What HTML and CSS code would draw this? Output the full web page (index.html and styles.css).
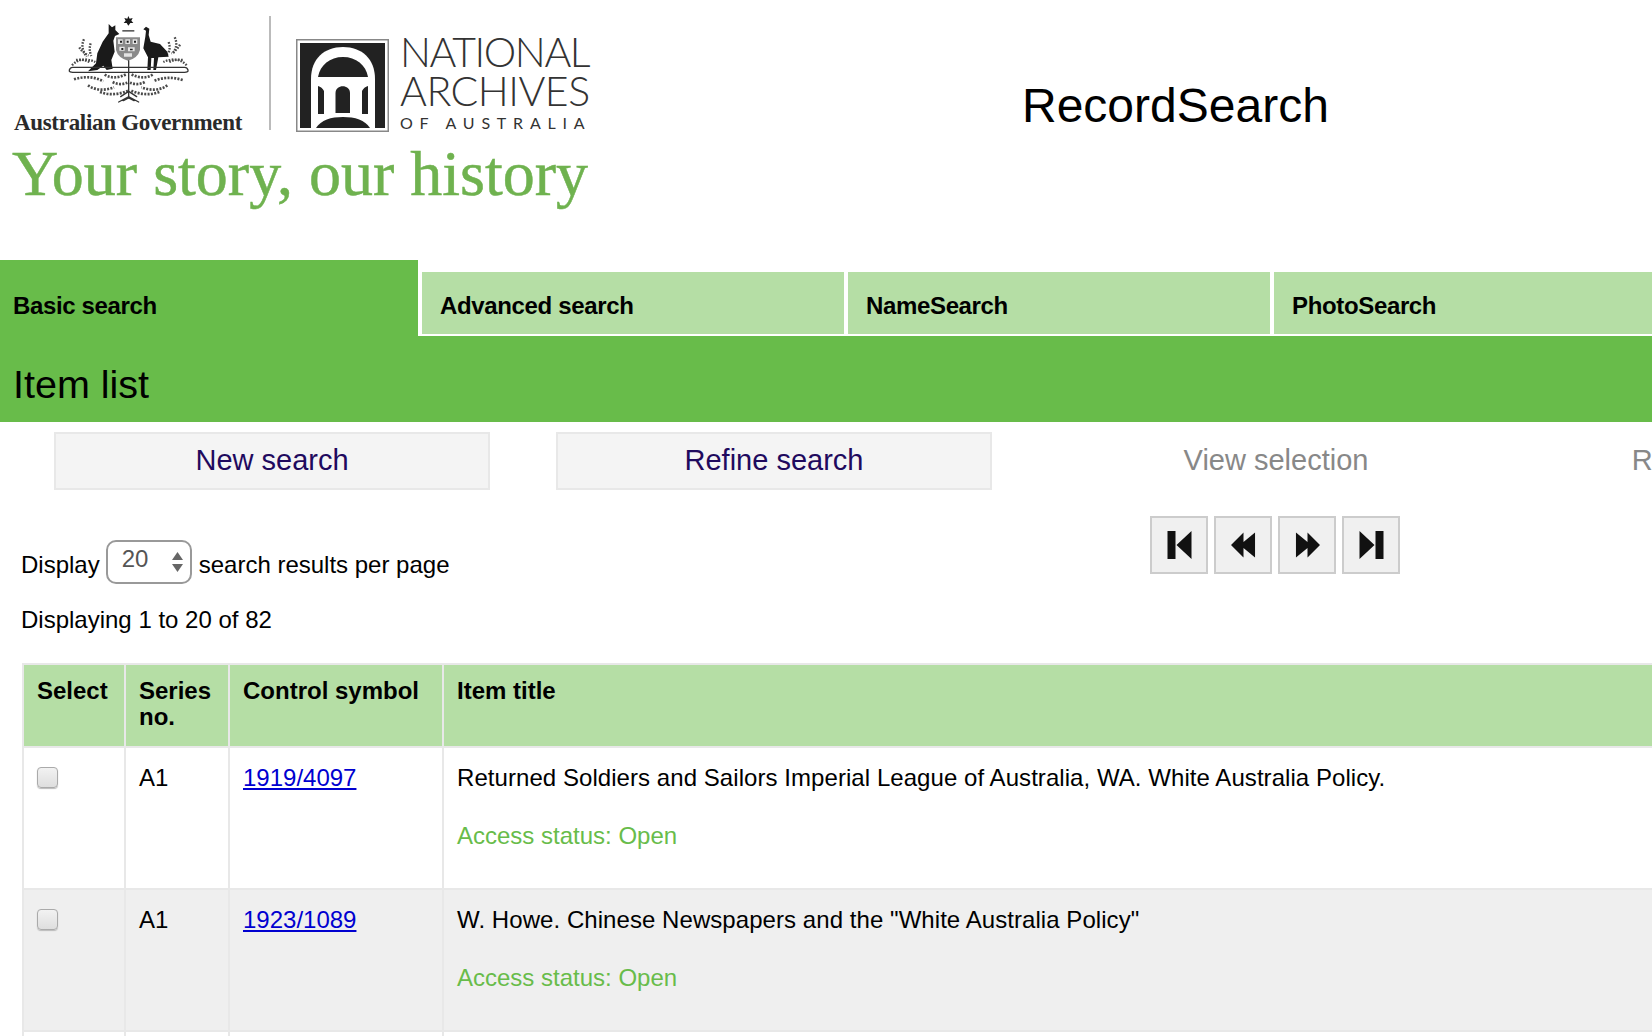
FILE: index.html
```html
<!DOCTYPE html>
<html lang="en">
<head>
<meta charset="utf-8">
<title>RecordSearch - Item list</title>
<link rel="stylesheet" href="styles.css">
</head>
<body>
<div class="page">
  <header class="masthead">
    <div class="brand">
      <div class="logos">
        <div class="gov">
          <svg class="crest" viewBox="0 0 420 300" aria-hidden="true">
            <g fill="none" stroke="#4a4a4a" stroke-linecap="butt">
              <g stroke-width="7" stroke-dasharray="5 4">
                <path d="M72 88c-8 16-6 32 8 52"/>
                <path d="M58 112c6 10 14 18 28 24"/>
                <path d="M92 100c-4 12-4 24 2 38"/>
                <path d="M344 82c8 16 6 32-6 50"/>
                <path d="M360 104c-6 10-14 20-26 26"/>
                <path d="M326 96c4 12 4 24-2 36"/>
                <path d="M36 166c18-20 44-22 70-10"/>
                <path d="M48 150c14-2 28 0 40 6"/>
                <path d="M380 166c-18-20-44-22-70-10"/>
                <path d="M368 150c-14-2-28 0-40 6"/>
              </g>
              <g stroke-width="8" stroke-dasharray="6 4">
                <path d="M42 208c32-10 62-8 88 6"/>
                <path d="M368 210c-32-10-62-8-88 4"/>
                <path d="M84 226c22 16 52 16 78 6"/>
                <path d="M322 226c-22 16-52 16-78 6"/>
                <path d="M120 246c26 10 58 8 84-4"/>
                <path d="M298 246c-26 10-58 8-84-4"/>
                <path d="M134 194c20 12 42 10 66-2"/>
                <path d="M278 194c-20 12-42 10-66-2"/>
                <path d="M158 216c14 8 30 8 44 2"/>
                <path d="M254 216c-14 8-30 8-44 2"/>
              </g>
            </g>
            <g fill="#1a1a1a">
              <path d="M205 18l4 8 9-2-4 8 6 7-9 0-6 8-5-8-9 0 6-7-4-8 9 2z"/>
              <path d="M146 42L156 52 166 46 166 60 178 72 165 78 160 92 164 125 154 150 158 176 140 180 130 167 112 180 84 184 108 160 112 130 128 95 146 70z"/>
              <path d="M250 58L258 50 268 56 266 75 272 95 300 102 322 125 326 140 295 142 288 180 280 180 282 144 274 144 272 180 262 180 264 142 250 115 256 80 258 62z"/>
              <path d="M187 60h36v5h-36z" opacity=".7"/>
            </g>
            <path d="M168 82h72v38q-6 24-36 32q-30-8-36-32z" fill="#8a8a8a"/>
            <path d="M174 88h14v14h-14zM196 88h14v14h-14zM218 88h14v14h-14zM178 110h16v12h-16zM204 112h20v12h-20zM192 130h24v10h-24z" fill="#e4e4e4"/>
            <path d="M180 92h6v6h-6zM200 92h6v6h-6zM222 92h6v6h-6zM184 114h6v6h-6zM210 116h8v5h-8z" fill="#222"/>
            <g fill="none" stroke="#333" stroke-linecap="round">
              <g stroke-width="4">
                <path d="M28 180c2-6 6-8 10-8h336c4 0 8 2 10 8s-6 7-10 7H38c-4 0-12-1-10-7z"/>
                <path d="M206 152v112"/>
                <path d="M176 276l30-16 30 16M182 260l24-16 24 16M190 272l16-8 16 8"/>
              </g>
            </g>
          </svg>
          <span class="gov-name">Australian Government</span>
        </div>
        <div class="rule"></div>
        <svg class="naa-mark" viewBox="0 0 93 93" aria-hidden="true">
          <rect x=".75" y=".75" width="91.500" height="91.500" fill="#fff" stroke="#888" stroke-width="1.500"/>
          <rect x="4" y="4" width="85" height="85" fill="#222"/>
          <path d="M15 89V40C15 20 28 8 47 8S79 20 79 40v49z" fill="#fff"/>
          <path d="M22 38c2-12 12-20 25-20s23 8 25 20z" fill="#222"/>
          <path d="M22 47q4 1 6 5v23h-6zM72 47q-4 1-6 5v23h6z" fill="#222"/>
          <path d="M39.500 54c0-9 14.500-9 14.500 0v20H39.500z" fill="#222"/>
          <path d="M20 89c5-8 15-11 27-11s22 3 27 11z" fill="#222"/>
        </svg>
        <div class="naa-name">
          <span class="naa-line naa-national">NATIONAL</span>
          <span class="naa-line">ARCHIVES</span>
          <span class="naa-sub">OF AUSTRALIA</span>
        </div>
      </div>
      <div class="tagline">Your story, our history</div>
    </div>
    <h1 class="site-title">RecordSearch</h1>
  </header>

  <nav class="tabs">
    <a class="tab tab-active">Basic search</a>
    <a class="tab">Advanced search</a>
    <a class="tab">NameSearch</a>
    <a class="tab">PhotoSearch</a>
  </nav>
  <h2 class="page-title">Item list</h2>

  <div class="actions">
    <a class="action action-live">New search</a>
    <a class="action action-live">Refine search</a>
    <a class="action action-off">View selection</a>
    <a class="action action-off action-tight">Request selected items</a>
  </div>

  <div class="controls">
    <div class="display-block">
      <div class="per-page">
        <span class="per-page-label">Display</span>
        <span class="select"><span class="select-value">20</span>
          <svg class="select-arrows" viewBox="0 0 11 20" aria-hidden="true"><path d="M5.500 0L11 8H0zM0 12h11l-5.500 8z" fill="#666"/></svg>
        </span>
        <span class="per-page-label">search results per page</span>
      </div>
      <p class="count">Displaying 1 to 20 of 82</p>
    </div>
    <div class="pager">
      <button class="page-btn" aria-label="First"><svg viewBox="0 0 24 28"><path d="M0 0h8v28H0zM24 0v28L9 14z"/></svg></button>
      <button class="page-btn" aria-label="Previous"><svg viewBox="0 0 26 28"><path d="M0 14L13 1v10L25 1v26L13 17v10z"/></svg></button>
      <button class="page-btn" aria-label="Next"><svg viewBox="0 0 26 28"><path d="M26 14L13 1v10L1 1v26l12-10v10z"/></svg></button>
      <button class="page-btn" aria-label="Last"><svg viewBox="0 0 24 28"><path d="M24 0h-8v28h8zM0 0v28l15-14z"/></svg></button>
    </div>
  </div>

  <table class="results">
    <thead>
      <tr>
        <th class="col-select">Select</th>
        <th class="col-series">Series no.</th>
        <th class="col-control">Control symbol</th>
        <th>Item title</th>
      </tr>
    </thead>
    <tbody>
      <tr>
        <td><span class="check"></span></td>
        <td>A1</td>
        <td><a class="item-link" href="#">1919/4097</a></td>
        <td>
          <div class="item-title">Returned Soldiers and Sailors Imperial League of Australia, WA. White Australia Policy.</div>
          <div class="access">Access status: Open</div>
        </td>
      </tr>
      <tr class="row-alt">
        <td><span class="check"></span></td>
        <td>A1</td>
        <td><a class="item-link" href="#">1923/1089</a></td>
        <td>
          <div class="item-title">W. Howe. Chinese Newspapers and the "White Australia Policy"</div>
          <div class="access">Access status: Open</div>
        </td>
      </tr>
      <tr>
        <td><span class="check"></span></td>
        <td>A1</td>
        <td><a class="item-link" href="#">1925/3342</a></td>
        <td>
          <div class="item-title">White Australia Policy</div>
          <div class="access">Access status: Open</div>
        </td>
      </tr>
    </tbody>
  </table>
</div>
</body>
</html>
```

FILE: styles.css
```css
html, body {
  margin: 0;
  padding: 0;
  background: #fff;
  overflow: hidden;
  height: 1036px;
}
.page {
  width: 2200px;
  font-family: "Liberation Sans", Arial, sans-serif;
  font-size: 24px;
  color: #000;
}

/* Masthead */
.masthead {
  height: 260px;
  display: flex;
  box-sizing: border-box;
}
.brand {
  width: 620px;
  padding: 10px 0 0 13px;
  box-sizing: border-box;
}
.logos {
  display: flex;
  align-items: flex-start;
  height: 130px;
}
.gov {
  width: 230px;
  display: flex;
  flex-direction: column;
  align-items: center;
}
.crest {
  width: 140px;
  height: 100px;
  margin-left: 3px;
  display: block;
  flex: none;
  filter: blur(.5px);
}
.gov-name {
  font-family: "Liberation Serif", serif;
  font-weight: bold;
  font-size: 23px;
  line-height: 26px;
  letter-spacing: -0.3px;
  color: #2a2a2a;
  white-space: nowrap;
}
.rule {
  width: 2px;
  height: 114px;
  background: #bbb;
  margin: 6px 25px 0 26px;
}
.naa-mark {
  width: 93px;
  height: 93px;
  margin-top: 29px;
  display: block;
  flex: none;
  filter: blur(.3px);
}
.naa-name {
  margin-left: 11px;
  margin-top: 22px;
  color: #333;
  font-family: Lato, sans-serif;
  font-weight: 300;
  display: flex;
  flex-direction: column;
}
.naa-line {
  font-size: 41px;
  line-height: 39px;
  letter-spacing: -0.5px;
  white-space: nowrap;
}
.naa-national {
  letter-spacing: -1.4px;
}
.naa-sub {
  font-size: 16px;
  line-height: 20px;
  margin-top: 3px;
  letter-spacing: 6.8px;
  font-weight: 400;
  white-space: nowrap;
}
.tagline {
  font-family: "Liberation Serif", serif;
  font-size: 64px;
  line-height: 64px;
  color: #6fb24f;
  -webkit-text-stroke: .5px #6fb24f;
  white-space: nowrap;
  margin-left: -1px;
  margin-top: 2px;
}
.site-title {
  margin: 79px 0 0 402px;
  font-size: 48px;
  line-height: 54px;
  font-weight: normal;
  white-space: nowrap;
}

/* Tabs */
.tabs {
  display: flex;
  align-items: flex-end;
  height: 76px;
}
.tab {
  width: 422px;
  height: 62px;
  margin: 0 0 2px 4px;
  box-sizing: border-box;
  background: #b5dea5;
  font-weight: bold;
  padding: 0 0 0 18px;
  line-height: 68px;
  letter-spacing: -0.35px;
}
.tab-active {
  width: 418px;
  height: 76px;
  margin: 0;
  background: #68bc4a;
  padding: 12px 0 0 13px;
}
.page-title {
  margin: 0;
  height: 86px;
  background: #68bc4a;
  font-size: 39.5px;
  font-weight: normal;
  line-height: 96px;
  padding-left: 13px;
}

/* Action buttons */
.actions {
  display: flex;
  gap: 66px;
  padding: 10px 0 0 54px;
}
.action {
  width: 436px;
  height: 58px;
  box-sizing: border-box;
  text-align: center;
  font-size: 29px;
  line-height: 53px;
  border: 2px solid transparent;
  white-space: nowrap;
}
.action-live {
  background: #f4f4f4;
  border-color: #e8e8e8;
  color: #1f0a5e;
}
.action-off {
  color: #888;
}
.action-tight {
  letter-spacing: -0.4px;
}

/* Controls */
.controls {
  display: flex;
  padding-left: 21px;
}
.display-block {
  width: 1129px;
  padding-top: 50px;
}
.per-page {
  display: flex;
  align-items: center;
  gap: 6px;
  height: 44px;
}
.per-page-label {
  margin-top: 6px;
}
.select {
  width: 86px;
  height: 44px;
  margin-right: 1px;
  box-sizing: border-box;
  border: 2px solid #999;
  border-radius: 10px;
  display: flex;
  align-items: center;
  padding: 0 7px 6px 14px;
  justify-content: space-between;
  color: #555;
}
.select-arrows {
  width: 11px;
  height: 20px;
  margin-top: 6px;
}
.count {
  margin: 22px 0 0;
  line-height: 28px;
}
.pager {
  display: flex;
  gap: 6px;
  padding-top: 26px;
}
.page-btn {
  width: 58px;
  height: 58px;
  padding: 0;
  border: 2px solid #ccc;
  background: #f0f0f0;
  display: flex;
  align-items: center;
  justify-content: center;
}
.page-btn svg {
  width: 25px;
  height: 28px;
  fill: #111;
}

/* Results table */
.results {
  margin: 29px 0 0 22px;
  width: 1900px;
  border-collapse: collapse;
  table-layout: fixed;
  border: 2px solid #e8e8e8;
}
.results th, .results td {
  border: 2px solid #e8e8e8;
  text-align: left;
  vertical-align: top;
}
.results th {
  background: #b5dea5;
  height: 56px;
  line-height: 26px;
  padding: 13px 13px 12px;
}
.results td {
  height: 112px;
  line-height: 27px;
  padding: 16px 13px 12px;
}
.col-select { width: 74px; }
.col-series { width: 76px; }
.col-control { width: 186px; }
.row-alt td {
  background: #efefef;
}
.check {
  display: block;
  width: 19px;
  height: 19px;
  margin: 3px 0 0;
  border: 1px solid #aaa;
  border-radius: 4px;
  background: linear-gradient(#f2f2f2, #dedede);
  box-shadow: 0 1px 1px #bbb;
}
.item-title {
  letter-spacing: .06px;
}
.item-link {
  color: #0000d0;
  text-decoration: underline;
}
.access {
  color: #68bc4a;
  margin-top: 31px;
}
```
